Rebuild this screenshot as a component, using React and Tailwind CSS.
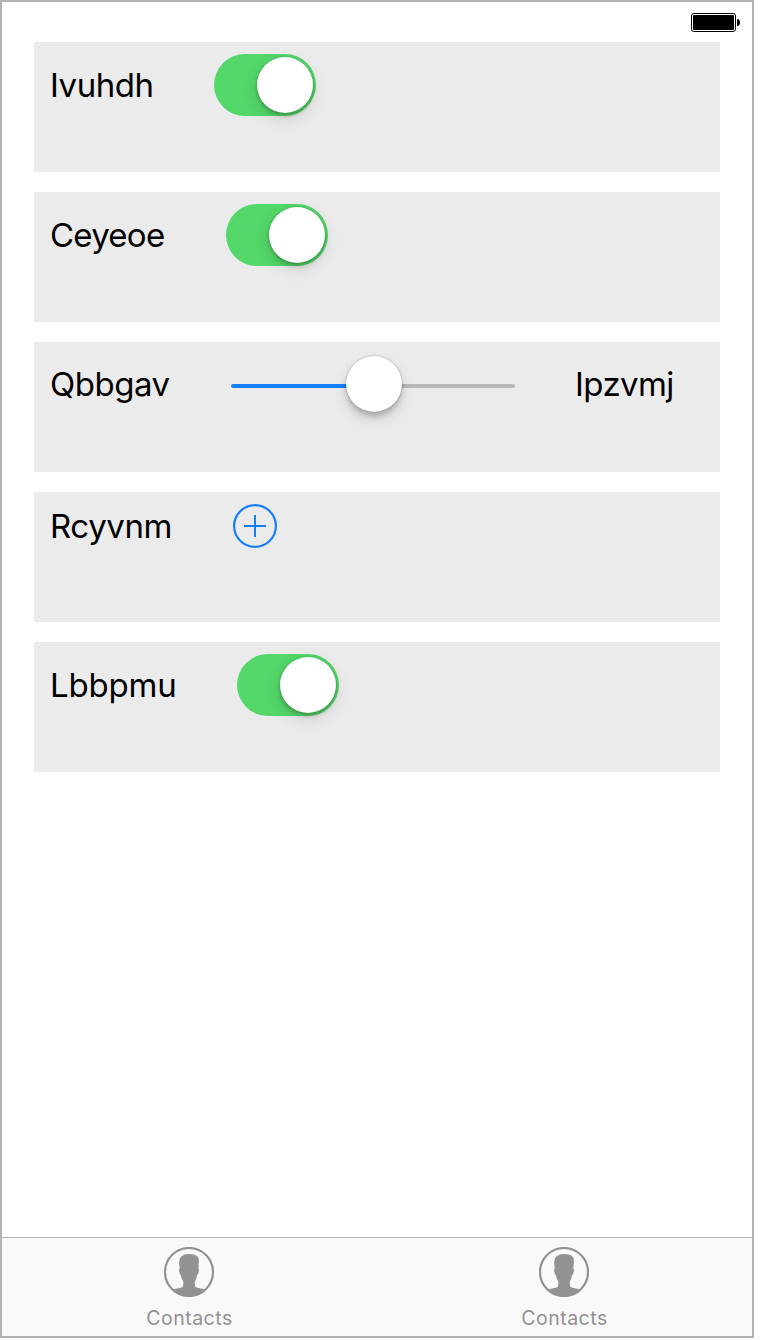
import React from "react";

function Label({ children, className }) {
  return (
    <span className={`shrink-0 whitespace-nowrap text-[33px] leading-[40px] text-black ${className}`}>
      {children}
    </span>
  );
}

function Card({ children }) {
  return <section className="h-[130px] bg-[#ebebeb] pt-3 pl-4">{children}</section>;
}

function Toggle() {
  return (
    <button
      role="switch"
      aria-checked="true"
      className="flex h-[62px] w-[102px] shrink-0 items-center justify-end rounded-full bg-[#53d769] pr-[3px]"
    >
      <span className="size-14 rounded-full bg-white shadow-[0_6px_16px_rgba(0,0,0,0.13),0_3px_4px_rgba(0,0,0,0.18),0_0px_3px_rgba(0,0,0,0.16)]" />
    </button>
  );
}

function ToggleCard({ label, className }) {
  return (
    <Card>
      <div className="flex h-[62px] items-center gap-[60px]">
        <Label className={className}>{label}</Label>
        <Toggle />
      </div>
    </Card>
  );
}

function Slider() {
  return (
    <div className="mt-0.5 flex h-[58px] w-[284px] shrink-0 items-center">
      <span className="mt-0.5 h-1 w-[117px] rounded-l-full bg-[#157efb]" />
      <span className="z-10 -mx-0.5 -mt-0.5 size-14 shrink-0 rounded-full bg-white shadow-[0_7px_14px_rgba(0,0,0,0.14),0_5px_4px_rgba(0,0,0,0.14),0_0_2px_rgba(0,0,0,0.35)]" />
      <span className="mt-0.5 h-1 flex-1 rounded-r-full bg-[#b7b7b7]" />
    </div>
  );
}

function Tab() {
  return (
    <button className="flex flex-1 flex-col items-center pt-[9px] text-[#929292]">
      <svg className="mr-px" width="50" height="50" viewBox="0 0 50 50" fill="none">
        <circle cx="25" cy="25" r="24" stroke="currentColor" strokeWidth="2.2" />
        <path
          d="M8 43.2C11.5 41.4 15 41.4 17.6 40.6C19 40.1 19.3 39 19.3 37V34.4C18 32.7 17.5 30.7 16.9 28.2C15.6 27.4 15 24.4 15.2 22L15.8 21.2C15 18 14.9 14.2 15.9 11.6C17.2 8.5 20.6 7 25 7C29.5 7 32.1 8 33.3 9.6C34.9 10.6 35.1 13.5 34.7 16.8C34.7 18.5 34.4 20 34.2 21.2L34.9 22C35 24.4 34.3 27.4 33 28.2C32.5 30.7 32 32.7 30.8 34.4V37C30.8 39 31.2 40.1 32.5 40.6C35 41.4 38.6 41.4 42 43.2C37.5 47.2 31.6 49.5 25 49.5C18.6 49.5 12.6 47.2 8 43.2Z"
          fill="currentColor"
        />
      </svg>
      <span className="mt-[9px] text-[19.5px] leading-6 tracking-[0.5px]">Contacts</span>
    </button>
  );
}

export default function App() {
  return (
    <div className="h-[1340px] w-[760px] bg-white font-['Inter',sans-serif]">
      <div className="flex h-[1338px] w-[754px] flex-col border-2 border-[#b2b2b2] bg-white">
        <header className="flex h-10 shrink-0 justify-end pt-[11px] pr-3">
          <svg width="49" height="19" viewBox="0 0 49 19">
            <rect x="0.5" y="0.5" width="44" height="18" rx="2.5" fill="white" stroke="black" />
            <rect x="2" y="2" width="41" height="15" rx="1" fill="black" />
            <path d="M46 6H46.5C48 6 49 7.5 49 9.5S48 13 46.5 13H46Z" fill="black" />
          </svg>
        </header>
        <main className="flex flex-1 flex-col gap-5 px-8">
          <ToggleCard label="Ivuhdh" className="w-[104px] tracking-[-0.45px]" />
          <ToggleCard label="Ceyeoe" className="w-[116px] tracking-[-0.75px]" />
          <Card>
            <div className="flex h-[60px] items-center gap-[60px]">
              <Label className="w-[121px] tracking-[-0.5px]">Qbbgav</Label>
              <Slider />
              <Label className="tracking-[-0.6px]">Ipzvmj</Label>
            </div>
          </Card>
          <Card>
            <div className="flex h-11 items-center gap-[60px]">
              <Label className="w-[123px] tracking-[-0.4px]">Rcyvnm</Label>
              <svg width="44" height="44" viewBox="0 0 44 44" fill="none" stroke="#157efb" strokeWidth="2">
                <circle cx="22" cy="22" r="20.9" strokeWidth="2.2" />
                <path d="M22 11V33M11 22H33" />
              </svg>
            </div>
          </Card>
          <ToggleCard label="Lbbpmu" className="w-[127px] tracking-[-0.2px]" />
        </main>
        <nav className="flex h-[99px] shrink-0 border-t border-[#b2b2b2] bg-[#f9f9f9]">
          <Tab />
          <Tab />
        </nav>
      </div>
    </div>
  );
}
